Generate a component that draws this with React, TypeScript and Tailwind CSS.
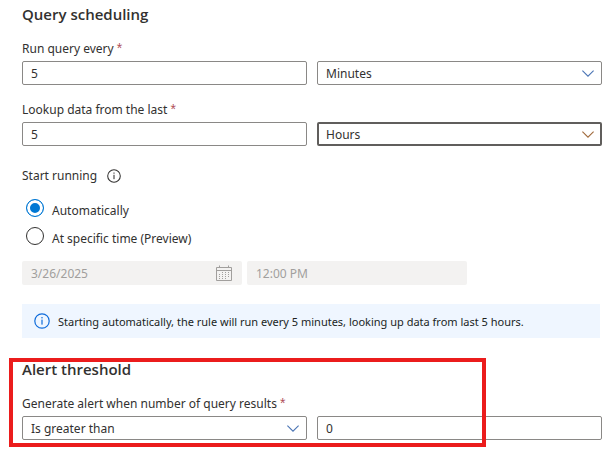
import { useState } from 'react';

type FieldProps = {
    id: string;
    label: string;
}

type DropdownProps = {
    id?: string;
    label?: string;
    options: string[];
    active?: boolean;
}

const FieldLabel = ({ id, label }: FieldProps) => (
    <label htmlFor={id} className="block text-xs leading-4 mb-1">
        {label} <span className="text-[#b0505a] font-['Liberation_Sans',sans-serif] text-sm leading-3">*</span>
    </label>
)

const NumberBox = ({ id, label, initial }: { id?: string; label?: string; initial: string }) => {
    const [value, setValue] = useState(initial);

    return (
        <input
            id={id}
            aria-label={label}
            type="text"
            value={value}
            onChange={(e) => setValue(e.target.value)}
            className="block w-full h-6 px-2 pt-px rounded-xs border border-[#8a8886] bg-white text-xs outline-none"
        />
    )
}

const Dropdown = ({ id, label, options, active }: DropdownProps) => (
    <div className="relative">
        <select
            id={id}
            aria-label={label}
            className={active
                ? "block w-full h-6 pl-[7px] pr-7 pt-[2px] appearance-none rounded-xs border-2 border-[#605e5c] bg-white text-xs outline-none"
                : "block w-full h-6 pl-2 pr-7 pt-[2px] appearance-none rounded-xs border border-[#8a8886] bg-white text-xs outline-none"}
        >
            {options.map((option) => <option key={option}>{option}</option>)}
        </select>
        <svg
            viewBox="0 0 12 7"
            className={active
                ? "absolute right-2 top-[9px] w-3 h-[7px] pointer-events-none text-[#a06a3c]"
                : "absolute right-2 top-[9px] w-3 h-[7px] pointer-events-none text-[#4a74b4]"}
        >
            <path d="M0.4 0.6 L6 6.2 L11.6 0.6" fill="none" stroke="currentColor" strokeWidth="1.1" />
        </svg>
    </div>
)

const InfoIcon = ({ className }: { className: string }) => (
    <svg viewBox="0 0 16 16" className={className}>
        <circle cx="8" cy="8" r="7.2" fill="none" stroke="currentColor" strokeWidth="1.2" />
        <rect x="7.4" y="6.6" width="1.2" height="5" fill="currentColor" />
        <rect x="7.4" y="4" width="1.2" height="1.4" fill="currentColor" />
    </svg>
)

const CalendarIcon = () => (
    <svg viewBox="0 0 16 16" className="absolute right-[10px] top-1 w-4 h-4 text-[#a19f9d]">
        <path d="M0.5 2.5 H15.5 V15.5 H0.5 Z M0.5 5.5 H15.5 M3.5 0.5 V3 M12.5 0.5 V3" fill="none" stroke="currentColor" />
        <path d="M6 7.5 H13 M3 9.5 H13 M3 11.5 H13 M3 13.5 H10" fill="none" stroke="currentColor" strokeDasharray="1 2" />
    </svg>
)

const StartOption = ({ id, label, checked, onChange }: FieldProps & { checked: boolean; onChange: () => void }) => (
    <div className="flex h-7 items-center pl-1">
        <input
            id={id}
            type="radio"
            name="start"
            checked={checked}
            onChange={onChange}
            className="w-[18px] h-[18px] appearance-none rounded-full border border-[#323130] bg-white checked:border-[#0078d4] checked:bg-[#0078d4] checked:shadow-[inset_0_0_0_3px_#fff]"
        />
        <label htmlFor={id} className="pl-2 pt-[6px] text-xs leading-4">{label}</label>
    </div>
)

const App = () => {

    const [start, setStart] = useState('auto');

    return (
        <main className="bg-white pl-[22px] pr-1 pt-1 pb-3 text-[#323130] font-['Noto_Sans','Segoe_UI',sans-serif]">
            <section>
                <h2 className="text-[15px] leading-5 font-semibold mb-[17px] font-['Open_Sans','Segoe_UI',sans-serif]">Query scheduling</h2>

                <FieldLabel id="run-every" label="Run query every" />
                <div className="grid grid-cols-2 gap-[10px] mb-[17px]">
                    <NumberBox id="run-every" initial="5" />
                    <Dropdown label="Run query unit" options={['Minutes', 'Hours', 'Days']} />
                </div>

                <FieldLabel id="lookup" label="Lookup data from the last" />
                <div className="grid grid-cols-2 gap-[10px] mb-[22px]">
                    <NumberBox id="lookup" initial="5" />
                    <Dropdown label="Lookup unit" options={['Hours', 'Minutes', 'Days']} active />
                </div>

                <fieldset>
                    <legend className="flex items-center gap-[10px] text-xs leading-4 mb-[10px]">
                        Start running
                        <InfoIcon className="w-[14px] h-[14px]" />
                    </legend>
                    <StartOption id="start-auto" label="Automatically" checked={start === 'auto'} onChange={() => setStart('auto')} />
                    <StartOption id="start-time" label="At specific time (Preview)" checked={start === 'time'} onChange={() => setStart('time')} />
                </fieldset>

                <div className="flex gap-[5px] mt-[11px] mb-[19px]">
                    <div className="relative w-[220px]">
                        <input type="text" aria-label="Start date" disabled defaultValue="3/26/2025" className="block w-full h-6 pl-[9px] pr-8 pt-px rounded-xs bg-[#f3f2f1] text-[#a19f9d] text-xs" />
                        <CalendarIcon />
                    </div>
                    <input type="text" aria-label="Start time" disabled defaultValue="12:00 PM" className="block w-[220px] h-6 px-[9px] pt-px rounded-xs bg-[#f3f2f1] text-[#a19f9d] text-xs" />
                </div>

                <div className="flex items-center gap-2 min-h-[34px] pl-3 pr-2 mr-[2px] mb-[21px] bg-[#eff6ff]">
                    <InfoIcon className="w-4 h-4 shrink-0 text-[#0f6cdb]" />
                    <p className="text-[11px] leading-4 pt-[2px] text-[#201f1e]">Starting automatically, the rule will run every 5 minutes, looking up data from last 5 hours.</p>
                </div>
            </section>

            <section className="relative">
                <h2 className="text-[15px] leading-5 font-semibold mb-[17px] font-['Open_Sans','Segoe_UI',sans-serif]">Alert threshold</h2>

                <FieldLabel id="operator" label="Generate alert when number of query results" />
                <div className="grid grid-cols-2 gap-[10px]">
                    <Dropdown id="operator" options={['Is greater than', 'Is fewer than', 'Is equal to']} />
                    <NumberBox label="Threshold" initial="0" />
                </div>

                {/* highlight around the threshold fields */}
                <div className="absolute -top-px -bottom-[7px] -left-[13px] right-[20%] border-4 border-[#eb1c1c] pointer-events-none"></div>
            </section>
        </main>
    )
}

export default App;
